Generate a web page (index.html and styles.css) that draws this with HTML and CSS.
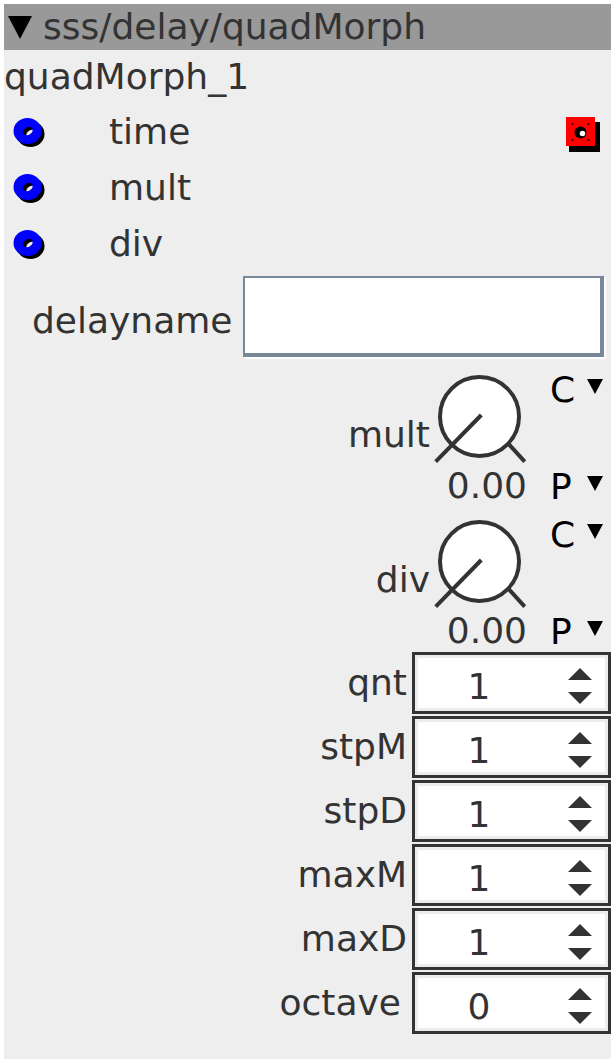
FILE: index.html
```html
<!DOCTYPE html>
<html>
<head>
<meta charset="utf-8">
<link rel="stylesheet" href="styles.css">
</head>
<body>
<div class="panel">
  <div class="header">
    <svg class="header-tri" width="24" height="23" viewBox="0 0 24 23"><polygon points="0,0 24,0 12,23" fill="#000"/></svg>
    <span class="header-text">sss/delay/quadMorph</span>
  </div>
  <div class="title">quadMorph_1</div>

  <div class="inlet">
    <svg class="port" width="34" height="32" viewBox="0 0 34 32">
      <defs>
        <mask id="ringA" maskUnits="userSpaceOnUse" x="0" y="0" width="34" height="32">
          <rect x="0" y="0" width="34" height="32" fill="#fff"/>
          <ellipse cx="15" cy="14" rx="5" ry="3.8" fill="#000" transform="rotate(-30 15 14)"/>
        </mask>
        <mask id="ringB" maskUnits="userSpaceOnUse" x="0" y="0" width="34" height="32">
          <rect x="0" y="0" width="34" height="32" fill="#fff"/>
          <ellipse cx="18" cy="17" rx="5" ry="3.8" fill="#000" transform="rotate(-30 18 17)"/>
        </mask>
      </defs>
      <ellipse cx="17.5" cy="17" rx="14" ry="13" fill="#000" mask="url(#ringB)"/>
      <ellipse cx="14.5" cy="14" rx="14" ry="13" fill="#0000ff" mask="url(#ringA)"/>
    </svg>
    <span class="inlet-label">time</span>
    <svg class="outlet" width="36" height="37" viewBox="0 0 36 37">
      <rect x="4" y="6" width="31" height="30" fill="#000"/>
      <rect x="1" y="1" width="29" height="29" fill="#ff0000"/>
      <rect x="6.5" y="7" width="2" height="2" fill="#400"/>
      <rect x="22.5" y="7" width="2" height="2" fill="#400"/>
      <rect x="6.5" y="23" width="2" height="2" fill="#400"/>
      <rect x="22.5" y="23" width="2" height="2" fill="#400"/>
      <circle cx="15.5" cy="16.5" r="6" fill="#000"/>
      <circle cx="17.5" cy="17.5" r="2.8" fill="#fff"/>
    </svg>
  </div>
  <div class="inlet">
    <svg class="port" width="34" height="32" viewBox="0 0 34 32">
      <defs>
        <mask id="ringC" maskUnits="userSpaceOnUse" x="0" y="0" width="34" height="32">
          <rect x="0" y="0" width="34" height="32" fill="#fff"/>
          <ellipse cx="15" cy="14" rx="5" ry="3.8" fill="#000" transform="rotate(-30 15 14)"/>
        </mask>
        <mask id="ringD" maskUnits="userSpaceOnUse" x="0" y="0" width="34" height="32">
          <rect x="0" y="0" width="34" height="32" fill="#fff"/>
          <ellipse cx="18" cy="17" rx="5" ry="3.8" fill="#000" transform="rotate(-30 18 17)"/>
        </mask>
      </defs>
      <ellipse cx="17.5" cy="17" rx="14" ry="13" fill="#000" mask="url(#ringD)"/>
      <ellipse cx="14.5" cy="14" rx="14" ry="13" fill="#0000ff" mask="url(#ringC)"/>
    </svg>
    <span class="inlet-label">mult</span>
  </div>
  <div class="inlet">
    <svg class="port" width="34" height="32" viewBox="0 0 34 32">
      <defs>
        <mask id="ringE" maskUnits="userSpaceOnUse" x="0" y="0" width="34" height="32">
          <rect x="0" y="0" width="34" height="32" fill="#fff"/>
          <ellipse cx="15" cy="14" rx="5" ry="3.8" fill="#000" transform="rotate(-30 15 14)"/>
        </mask>
        <mask id="ringF" maskUnits="userSpaceOnUse" x="0" y="0" width="34" height="32">
          <rect x="0" y="0" width="34" height="32" fill="#fff"/>
          <ellipse cx="18" cy="17" rx="5" ry="3.8" fill="#000" transform="rotate(-30 18 17)"/>
        </mask>
      </defs>
      <ellipse cx="17.5" cy="17" rx="14" ry="13" fill="#000" mask="url(#ringF)"/>
      <ellipse cx="14.5" cy="14" rx="14" ry="13" fill="#0000ff" mask="url(#ringE)"/>
    </svg>
    <span class="inlet-label">div</span>
  </div>

  <div class="field">
    <span class="field-label">delayname</span>
    <div class="text-input"></div>
  </div>

  <div class="knob-block">
    <span class="knob-label">mult</span>
    <div class="knob-col">
      <svg class="knob" width="96" height="94" viewBox="0 0 96 94">
        <circle cx="45.5" cy="44.5" r="39.5" fill="#fff" stroke="#333" stroke-width="4"/>
        <line x1="47.3" y1="43" x2="1.7" y2="89.7" stroke="#333" stroke-width="4"/>
        <line x1="75" y1="72.3" x2="90.7" y2="89.7" stroke="#333" stroke-width="4"/>
      </svg>
      <div class="knob-value">0.00</div>
    </div>
    <div class="cp-col">
      <div class="cp"><span>C</span><svg class="cp-arrow" width="16" height="15" viewBox="0 0 16 15"><polygon points="0,0 16,0 8,15" fill="#000"/></svg></div>
      <div class="cp cp-p"><span>P</span><svg class="cp-arrow" width="16" height="15" viewBox="0 0 16 15"><polygon points="0,0 16,0 8,15" fill="#000"/></svg></div>
    </div>
  </div>

  <div class="knob-block knob-block-2">
    <span class="knob-label">div</span>
    <div class="knob-col">
      <svg class="knob" width="96" height="94" viewBox="0 0 96 94">
        <circle cx="45.5" cy="44.5" r="39.5" fill="#fff" stroke="#333" stroke-width="4"/>
        <line x1="47.3" y1="43" x2="1.7" y2="89.7" stroke="#333" stroke-width="4"/>
        <line x1="75" y1="72.3" x2="90.7" y2="89.7" stroke="#333" stroke-width="4"/>
      </svg>
      <div class="knob-value">0.00</div>
    </div>
    <div class="cp-col">
      <div class="cp"><span>C</span><svg class="cp-arrow" width="16" height="15" viewBox="0 0 16 15"><polygon points="0,0 16,0 8,15" fill="#000"/></svg></div>
      <div class="cp cp-p"><span>P</span><svg class="cp-arrow" width="16" height="15" viewBox="0 0 16 15"><polygon points="0,0 16,0 8,15" fill="#000"/></svg></div>
    </div>
  </div>

  <div class="spins">
    <div class="spin-row"><span class="spin-label">qnt</span><div class="spin"><span class="spin-value">1</span><span class="spin-arrows"><svg width="24" height="36" viewBox="0 0 24 36"><polygon points="12,0 24,12 0,12" fill="#333"/><polygon points="0,24 24,24 12,36" fill="#333"/></svg></span></div></div>
    <div class="spin-row"><span class="spin-label">stpM</span><div class="spin"><span class="spin-value">1</span><span class="spin-arrows"><svg width="24" height="36" viewBox="0 0 24 36"><polygon points="12,0 24,12 0,12" fill="#333"/><polygon points="0,24 24,24 12,36" fill="#333"/></svg></span></div></div>
    <div class="spin-row"><span class="spin-label">stpD</span><div class="spin"><span class="spin-value">1</span><span class="spin-arrows"><svg width="24" height="36" viewBox="0 0 24 36"><polygon points="12,0 24,12 0,12" fill="#333"/><polygon points="0,24 24,24 12,36" fill="#333"/></svg></span></div></div>
    <div class="spin-row"><span class="spin-label">maxM</span><div class="spin"><span class="spin-value">1</span><span class="spin-arrows"><svg width="24" height="36" viewBox="0 0 24 36"><polygon points="12,0 24,12 0,12" fill="#333"/><polygon points="0,24 24,24 12,36" fill="#333"/></svg></span></div></div>
    <div class="spin-row"><span class="spin-label">maxD</span><div class="spin"><span class="spin-value">1</span><span class="spin-arrows"><svg width="24" height="36" viewBox="0 0 24 36"><polygon points="12,0 24,12 0,12" fill="#333"/><polygon points="0,24 24,24 12,36" fill="#333"/></svg></span></div></div>
    <div class="spin-row"><span class="spin-label spin-label-wide">octave</span><div class="spin"><span class="spin-value">0</span><span class="spin-arrows"><svg width="24" height="36" viewBox="0 0 24 36"><polygon points="12,0 24,12 0,12" fill="#333"/><polygon points="0,24 24,24 12,36" fill="#333"/></svg></span></div></div>
  </div>
</div>
</body>
</html>
```
FILE: styles.css
```css
html, body {
  margin: 0;
  padding: 0;
  background: #fff;
}

.panel {
  margin: 4px 0 0 4px;
  width: 607px;
  height: 1055px;
  background: #eeeeee;
  font-family: "DejaVu Sans", sans-serif;
  font-size: 36px;
  color: #333;
  box-sizing: border-box;
}

.header {
  height: 46px;
  background: #999999;
  display: flex;
  align-items: center;
}

.header-tri {
  display: block;
  margin-left: 4px;
  margin-right: 11px;
  flex: none;
}

.header-text {
  line-height: 46px;
  white-space: nowrap;
}

.title {
  height: 54px;
  line-height: 54px;
}

.inlet {
  height: 56px;
  display: flex;
  align-items: center;
}

.port {
  display: block;
  margin-left: 9px;
  margin-top: 2px;
  flex: none;
}

.inlet-label {
  margin-left: 62px;
  line-height: 56px;
}

.outlet {
  display: block;
  margin-left: auto;
  margin-right: 10px;
  align-self: flex-start;
  margin-top: 12px;
}

.field {
  height: 93px;
  display: flex;
  align-items: flex-start;
  padding-left: 28px;
  box-sizing: border-box;
}

.field-label {
  margin-top: 8px;
  line-height: 81px;
}

.text-input {
  margin-top: 4px;
  margin-left: 11px;
  width: 361px;
  height: 81px;
  box-sizing: border-box;
  background: #fff;
  border-style: solid;
  border-color: #778899;
  border-width: 2px 4px 4px 2px;
  box-shadow: 2px 2px 0 #fff;
}

.knob-block {
  height: 145px;
  display: flex;
  justify-content: flex-end;
  align-items: flex-start;
  padding-right: 8px;
  box-sizing: border-box;
}

.knob-block-2 {
  height: 142px;
}

.knob-label {
  margin-top: 50px;
  margin-right: 4px;
  line-height: 40px;
}

.knob-col {
  width: 96px;
  flex: none;
}

.knob {
  display: block;
  margin-top: 7px;
}

.knob-value {
  line-height: 40px;
  text-align: right;
  padding-right: 3px;
  white-space: nowrap;
}

.cp-col {
  width: 53px;
  margin-left: 20px;
  padding-top: 5px;
  flex: none;
}

.cp {
  display: flex;
  align-items: flex-start;
  font-size: 36px;
  line-height: 40px;
  color: #000;
}

.cp-p {
  margin-top: 57px;
}

.cp-arrow {
  display: block;
  margin-left: auto;
  margin-top: 9px;
}

.spin-row {
  height: 64px;
  display: flex;
  justify-content: flex-end;
  align-items: flex-start;
}

.spin-label {
  line-height: 62px;
  margin-right: 5px;
}

.spin-label-wide {
  margin-right: 11px;
}

.spin {
  width: 199px;
  height: 62px;
  box-sizing: border-box;
  border: 3px solid #333;
  box-shadow: inset 0 0 0 3px #ececec;
  background: #fff;
  display: flex;
  align-items: flex-start;
}

.spin-value {
  width: 128px;
  flex: none;
  text-align: center;
  line-height: 48px;
  padding-top: 8px;
}

.spin-arrows {
  display: block;
  padding-top: 13px;
  margin-left: 25px;
}

.spin-arrows svg {
  display: block;
}
```
